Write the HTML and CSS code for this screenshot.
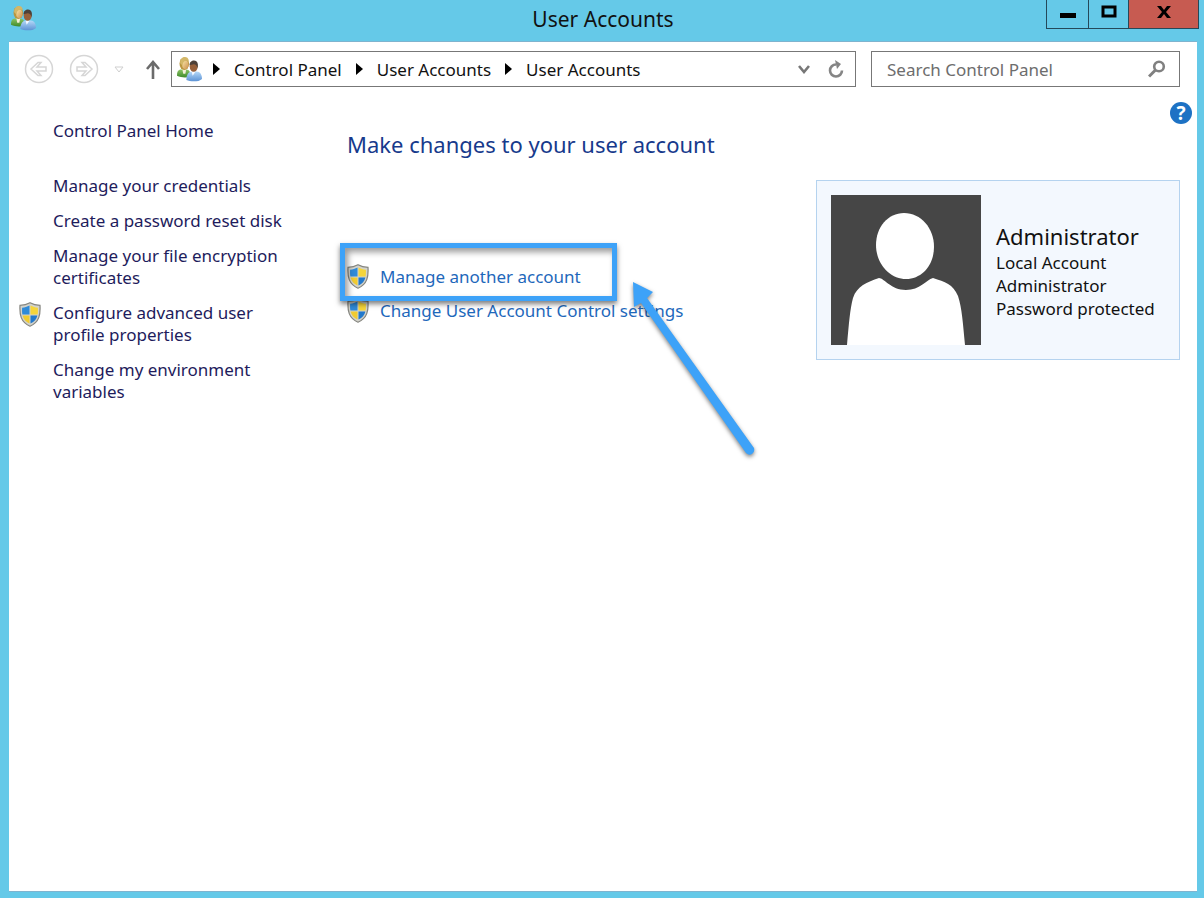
FILE: index.html
```html
<!DOCTYPE html>
<html lang="en">
<head>
    <meta charset="UTF-8">
    <meta name="viewport" content="width=device-width, initial-scale=1.0">
    <title>User Accounts</title>
    <link rel="stylesheet" href="styles.css">
</head>
<body>
    <!-- Shared icons -->
    <svg class="defs" width="0" height="0" aria-hidden="true">
        <defs>
            <linearGradient id="skin" x1="0" y1="0" x2="1" y2="1">
                <stop offset="0" stop-color="#fbe6a8"/>
                <stop offset="1" stop-color="#c98d4c"/>
            </linearGradient>
            <linearGradient id="green" x1="0" y1="0" x2="0" y2="1">
                <stop offset="0" stop-color="#8cc466"/>
                <stop offset="1" stop-color="#3f8a2a"/>
            </linearGradient>
            <linearGradient id="blue" x1="0" y1="0" x2="0" y2="1">
                <stop offset="0" stop-color="#b4d8f8"/>
                <stop offset="1" stop-color="#5c92d4"/>
            </linearGradient>
            <symbol id="users" viewBox="0 0 24 24">
                <path d="M0 18c0-4 1-6 4-6h5c3 0 4 3 4 7-4 1-9 1-13-1z" fill="url(#green)"/>
                <path d="M5 11h4l-1 5H6z" fill="#f6efd8"/>
                <ellipse cx="7" cy="6.500" rx="4.600" ry="6" fill="#b9963f"/>
                <ellipse cx="8" cy="7.500" rx="3" ry="4.200" fill="url(#skin)"/>
                <path d="M3 6c0-8 9-7 8-2-3-1-5 0-6 4z" fill="#d3b768"/>
                <path d="M9 22c0-5 2-8 6-8h4c3 0 5 3 5 7-3 3-11 3-15 1z" fill="url(#blue)"/>
                <path d="M14 14h4l-3 4z" fill="#f4f8ff"/>
                <ellipse cx="16" cy="9" rx="3.800" ry="5.200" fill="#97603a"/>
                <path d="M12 8c0-6 8-6 8-1v4c-1-3-2-4-4-4z" fill="#4d4038"/>
            </symbol>
            <symbol id="shield" viewBox="0 0 22 25">
                <path d="M11 .8C8 2.500 4.500 3.300 1 3.400c-.5 9 .5 16.600 10 20.800 9.500-4.200 10.500-11.800 10-20.800C17.500 3.300 14 2.500 11 .8z" fill="#d3d3cb" stroke="#85857f" stroke-width="1.200"/>
                <path d="M10.500 3.500v9H3.400c-.4-2-.4-4.500-.3-6.800 2.700-.2 5-.9 7.400-2.200z" fill="#2f8ad8"/>
                <path d="M11.500 3.500v9h7.100c.4-2 .4-4.500.3-6.800-2.700-.2-5-.9-7.400-2.200z" fill="#f5d53b"/>
                <path d="M3.600 13.400h6.900v8.100c-4-1.900-6-4.500-6.900-8.100z" fill="#f1cb30"/>
                <path d="M18.400 13.400h-6.900v8.100c4-1.900 6-4.500 6.900-8.100z" fill="#2379cc"/>
            </symbol>
        </defs>
    </svg>

    <div class="window">
        <header class="titlebar">
            <svg class="app-icon" width="25" height="25"><use href="#users"/></svg>
            <h1>User Accounts</h1>
            <div class="window-buttons">
                <button class="minimize" aria-label="Minimize">
                    <svg width="16" height="16"><path d="M0 9h16v5H0z"/></svg>
                </button>
                <button class="maximize" aria-label="Maximize">
                    <svg width="16" height="14"><path d="M2 2h12v9H2z" fill="none" stroke="#000" stroke-width="3"/></svg>
                </button>
                <button class="close" aria-label="Close">
                    <svg width="14" height="12"><path d="M0 0h4l3 4 3-4h4L9 6l5 6h-4L7 8l-3 4H0l5-6z"/></svg>
                </button>
            </div>
        </header>

        <div class="client">
            <nav class="toolbar">
                <button class="nav-button" aria-label="Back">
                    <svg width="30" height="30" fill="none" stroke="#d6d6d6" stroke-width="1.500">
                        <circle cx="15" cy="15" r="13.500"/>
                        <path d="M7 15l7-6.500h3L13 13h9v4h-9l4 4.500h-3z"/>
                    </svg>
                </button>
                <button class="nav-button" aria-label="Forward">
                    <svg width="30" height="30" fill="none" stroke="#d6d6d6" stroke-width="1.500">
                        <circle cx="15" cy="15" r="13.500"/>
                        <path d="M23 15l-7-6.500h-3L17 13H8v4h9l-4 4.500h3z"/>
                    </svg>
                </button>
                <button class="recent" aria-label="Recent locations">
                    <svg width="10" height="7"><path d="M1 1h8L5 6z" fill="none" stroke="#cfcfcf"/></svg>
                </button>
                <button class="up" aria-label="Up">
                    <svg width="14" height="19" fill="none" stroke="#6b6b6b" stroke-width="2.600"><path d="M7 19V2M1 9l6-7 6 7"/></svg>
                </button>
                <div class="address">
                    <svg width="25" height="25"><use href="#users"/></svg>
                    <svg class="crumb-arrow" width="7" height="12"><path d="M0 0l7 6-7 6z"/></svg>
                    <a href="#">Control Panel</a>
                    <svg class="crumb-arrow" width="7" height="12"><path d="M0 0l7 6-7 6z"/></svg>
                    <a href="#">User Accounts</a>
                    <svg class="crumb-arrow" width="7" height="12"><path d="M0 0l7 6-7 6z"/></svg>
                    <a href="#">User Accounts</a>
                    <button class="history" aria-label="Previous locations">
                        <svg width="12" height="9" fill="none" stroke="#777" stroke-width="2.600"><path d="M1 1l5 6 5-6"/></svg>
                    </button>
                    <button class="refresh" aria-label="Refresh">
                        <svg width="16" height="18"><path d="M8 4.500A6 6 0 1 0 14 10.500" fill="none" stroke="#858585" stroke-width="2.600"/><path d="M7 0l6 4-4 5z" fill="#858585"/></svg>
                    </button>
                </div>
                <div class="search">
                    <input type="text" placeholder="Search Control Panel" aria-label="Search Control Panel">
                    <button aria-label="Search">
                        <svg width="18" height="18" fill="none" stroke="#808080"><circle cx="11" cy="6.500" r="4.800" stroke-width="2.600"/><path d="M7.500 10L1 16.500" stroke-width="3"/></svg>
                    </button>
                </div>
            </nav>

            <div class="body">
                <aside class="sidebar">
                    <a class="home" href="#">Control Panel Home</a>
                    <a href="#">Manage your credentials</a>
                    <a href="#">Create a password reset disk</a>
                    <a href="#">Manage your file encryption certificates</a>
                    <a class="admin-task" href="#">
                        <svg width="22" height="25"><use href="#shield"/></svg>
                        <span>Configure advanced user profile properties</span>
                    </a>
                    <a href="#">Change my environment variables</a>
                </aside>

                <main class="content">
                    <h2>Make changes to your user account</h2>
                    <div class="tasks">
                        <a class="highlighted" href="#">
                            <svg width="22" height="25"><use href="#shield"/></svg>
                            <span>Manage another account</span>
                        </a>
                        <a href="#">
                            <svg width="22" height="25"><use href="#shield"/></svg>
                            <span>Change User Account Control settings</span>
                        </a>
                        <svg class="pointer" width="130" height="185" fill="#3da2f8">
                            <path d="M5 7l20 10-6 6 107 150q1 4-2 6t-6-1L13 28l-7 4z"/>
                        </svg>
                    </div>
                </main>

                <section class="account">
                    <button class="help" aria-label="Help">?</button>
                    <div class="card">
                        <svg class="avatar" width="150" height="150">
                            <path d="M0 0h150v150H0z" fill="#464646"/>
                            <path d="M73 18c17 0 30 15 30 34 0 18-12 32-28 32S45 69 45 50c0-18 12-32 28-32z" fill="#fff"/>
                            <path d="M16 150c2-22 3-36 6-47 4-12 14-16 26-20 5 0 12 12 27 12 14 0 20-10 27-12 12 4 20 6 25 18 4 12 5 28 7 49z" fill="#fff"/>
                        </svg>
                        <div class="details">
                            <h3>Administrator</h3>
                            <p>Local Account</p>
                            <p>Administrator</p>
                            <p>Password protected</p>
                        </div>
                    </div>
                </section>
            </div>
        </div>
    </div>
</body>
</html>
```
FILE: styles.css
```css
/* Styles */
*, *::after {
    box-sizing: border-box;
}
body {
    font-family: 'Noto Sans', sans-serif;
    font-size: 17px;
    line-height: 23px;
    margin: 0;
    color: #111;
}
h1, h2, h3, p {
    margin: 0;
    font-weight: 400;
}
a {
    color: inherit;
    text-decoration: none;
}
a:hover {
    text-decoration: underline;
}
button {
    display: flex;
    align-items: center;
    justify-content: center;
    padding: 0;
    border: none;
    background: none;
    cursor: pointer;
}
svg {
    flex-shrink: 0;
}
.defs {
    position: absolute;
}

/* Window frame */
.window {
    display: flex;
    flex-direction: column;
    min-height: 100vh;
    padding: 0 7px 6px 9px;
    background-color: #65c9e8;
}
.titlebar {
    display: grid;
    grid-template-columns: 1fr auto 1fr;
    height: 41px;
}
.titlebar h1 {
    font-size: 21px;
    line-height: 38px;
}
.app-icon {
    margin: 6px 0 0 2px;
}
.window-buttons {
    display: flex;
    justify-self: end;
    height: 29px;
    margin-right: -2px;
    border: 1px solid #24495a;
    border-top: none;
}
.window-buttons button {
    width: 40px;
    padding-bottom: 4px;
    border-right: 1px solid #24495a;
}
.window-buttons .minimize {
    width: 42px;
}
.window-buttons .close {
    width: 69px;
    border-right: none;
    background-color: #c75b51;
}
.client {
    flex: 1;
    background-color: #fff;
    border: 1px solid #7fb4cf;
    border-width: 1px 0;
}

/* Toolbar */
.toolbar {
    display: flex;
    align-items: center;
    padding: 9px 17px 0 15px;
}
.nav-button {
    margin-right: 15px;
}
.recent {
    margin-right: 22px;
}
.up {
    margin-right: 11px;
}
.address {
    flex: 1;
    display: flex;
    align-items: center;
    height: 36px;
    padding: 0 11px 0 5px;
    border: 1px solid #777;
}
.address a {
    white-space: nowrap;
}
.crumb-arrow {
    margin: 0 14px;
}
svg + .crumb-arrow {
    margin-left: 11px;
}
.history {
    margin-left: auto;
}
.refresh {
    margin-left: 18px;
}
.search {
    display: flex;
    align-items: center;
    width: 309px;
    height: 36px;
    margin-left: 15px;
    padding: 0 13px 0 15px;
    border: 1px solid #777;
}
.search input {
    flex: 1;
    min-width: 0;
    padding: 0;
    border: none;
    outline: none;
    font: inherit;
}
.search input::placeholder {
    color: #6d6d6d;
    opacity: 1;
}

/* Page body */
.body {
    display: flex;
    padding: 15px 17px 20px 44px;
}
.sidebar {
    display: flex;
    flex-direction: column;
    gap: 13px;
    width: 240px;
    margin-right: 54px;
    padding-top: 18px;
    line-height: 22px;
    color: #1e1c5c;
}
.sidebar .home {
    margin-bottom: 20px;
}
.admin-task {
    display: flex;
    gap: 12px;
    margin-left: -34px;
}
.content {
    flex: 1;
    padding-top: 28px;
}
.content h2 {
    color: #173a8c;
    font-size: 22px;
    line-height: 28px;
}
.tasks {
    position: relative;
    display: flex;
    flex-direction: column;
    gap: 9px;
    margin-top: 106px;
    color: #1e68bb;
}
.tasks a {
    position: relative;
    display: flex;
    align-items: center;
    gap: 11px;
    white-space: nowrap;
}
.tasks .highlighted {
    z-index: 1;
}
.highlighted::after {
    content: '';
    position: absolute;
    top: -21px;
    left: -7px;
    width: 277px;
    height: 58px;
    border: 5px solid #3da2f8;
    box-shadow: 0 3px 5px rgba(0, 0, 0, 0.5), inset 3px 4px 6px rgba(0, 0, 0, 0.4);
}
.pointer {
    position: absolute;
    z-index: 1;
    top: 11px;
    left: 281px;
    filter: drop-shadow(0 2px 2px rgba(0, 0, 0, 0.5));
}

/* Account card */
.account {
    display: flex;
    flex-direction: column;
}
.help {
    align-self: flex-end;
    width: 22px;
    height: 22px;
    margin: 0 -12px 56px 0;
    border-radius: 50%;
    background-color: #1d72c4;
    color: #fff;
    font: bold 19px 'Noto Sans', sans-serif;
}
.card {
    display: flex;
    align-items: center;
    gap: 15px;
    width: 364px;
    height: 180px;
    padding: 14px;
    border: 1px solid #b5d3ef;
    background-color: #f3f8fe;
}
.details h3 {
    font-size: 22px;
    line-height: 30px;
}
```
